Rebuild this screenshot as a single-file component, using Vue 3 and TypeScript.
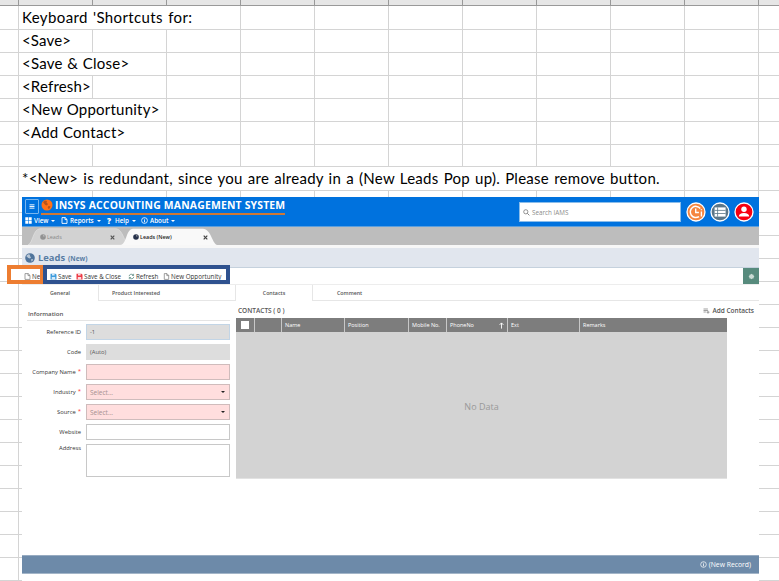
<script setup lang="ts">
interface Cell { span: number; text?: string; cls?: string }
interface Field { label: string; value?: string; kind: string; required?: boolean; select?: boolean }

const blanks = (n: number): Cell[] => Array.from({ length: n }, () => ({ span: 1 }))

const rows: Cell[][] = [
  [{ span: 3, text: "Keyboard 'Shortcuts for:", cls: 'w1' }, ...blanks(8)],
  [{ span: 1, text: '<Save>', cls: 'w2' }, ...blanks(10)],
  [{ span: 2, text: '<Save & Close>', cls: 'w3' }, ...blanks(9)],
  [{ span: 1, text: '<Refresh>', cls: 'w2' }, ...blanks(10)],
  [{ span: 2, text: '<New Opportunity>', cls: 'w3' }, ...blanks(9)],
  [{ span: 2, text: '<Add Contact>', cls: 'w3' }, ...blanks(9)],
  blanks(11),
  [{ span: 9, text: '*<New> is redundant, since you are already in a (New Leads Pop up). Please remove button.', cls: 'w8' }, ...blanks(2)],
  ...Array.from({ length: 17 }, () => blanks(11)),
]

const fields: Field[] = [
  { label: 'Reference ID', value: '-1', kind: 'locked focus' },
  { label: 'Code', value: '(Auto)', kind: 'locked' },
  { label: 'Company Name', kind: 'must', required: true },
  { label: 'Industry', value: 'Select...', kind: 'must', required: true, select: true },
  { label: 'Source', value: 'Select...', kind: 'must', required: true, select: true },
  { label: 'Website', kind: '' },
  { label: 'Address', kind: 'area' },
]

const columns = ['Name', 'Position', 'Mobile No.', 'PhoneNo', 'Ext', 'Remarks']
</script>

<template>
  <div class="page">
    <div class="sheet">
      <div class="row heads"><i></i><b v-for="n in 11" :key="n"></b></div>
      <div v-for="(row, r) in rows" :key="r" class="row">
        <i></i>
        <div v-for="(c, k) in row" :key="k" class="cell" :class="'s' + c.span">
          <span v-if="c.text" :class="c.cls">{{ c.text }}</span>
        </div>
      </div>
    </div>

    <main class="app">
      <header class="top">
        <div class="brand-side">
          <div class="brand">
            <span class="burger"><svg viewBox="0 0 13 14"><path d="M3.8 5.2h5.4M3.8 7h5.4M3.8 8.8h5.4" stroke="#fff" stroke-width="1" /></svg></span>
            <div class="name">
              <svg class="globe" viewBox="0 0 12 12"><circle cx="6" cy="6" r="5.5" fill="#ff7216" /><path d="M2 3l2-1.5 2 .5-.5 1.4L7 5l-1 1.4L4.3 6 3 4.6zM7.4 7l2 .3-.6 2-1.3.8-.8-1.6z" fill="#b9541a" /></svg>
              <h1>INSYS ACCOUNTING MANAGEMENT SYSTEM</h1>
            </div>
          </div>
          <nav class="menu">
            <span class="m1"><svg viewBox="0 0 7 7"><path d="M.3.3h2.9v2.9H.3zM3.8 .3h2.9v2.9H3.8zM.3 3.8h2.9v2.9H.3zM3.8 3.8h2.9v2.9H3.8z" fill="#fff" /></svg>View<em></em></span>
            <span class="m2"><svg viewBox="0 0 7 7"><path d="M1 .6h3.2L6 2.4v4H1zM4 .6v2h2" fill="none" stroke="#fff" stroke-width=".9" /></svg>Reports<em></em></span>
            <span class="m3"><strong>?</strong>Help<em></em></span>
            <span class="m4"><svg viewBox="0 0 7 7"><circle cx="3.5" cy="3.5" r="2.9" fill="none" stroke="#fff" stroke-width=".8" /><path d="M3.5 1.8v.8M3.5 3.1v2.2" stroke="#fff" stroke-width=".9" /></svg>About<em></em></span>
          </nav>
        </div>
        <div class="search">
          <svg viewBox="0 0 8 8"><circle cx="3.2" cy="3.2" r="2.4" fill="none" stroke="#666" stroke-width=".8" /><path d="M5 5l2.3 2.3" stroke="#666" stroke-width=".9" /></svg>
          <span>Search IAMS</span>
        </div>
        <div class="rounds">
          <svg viewBox="0 0 20 20"><circle cx="10" cy="10" r="9" fill="#f5853f" stroke="#fff" stroke-width="1.3" /><path d="M14.2 6.4A5.6 5.6 0 1 0 13 14.6" fill="none" stroke="#fff" stroke-width="1.5" /><path d="M9.7 6.4v4.1h3.2M15.4 9.4v5.2M15.4 7.2v1.1" fill="none" stroke="#fff" stroke-width="1.4" /></svg>
          <svg viewBox="0 0 20 20"><circle cx="10" cy="10" r="9" fill="#5b7688" stroke="#fff" stroke-width="1.3" /><path d="M4.6 5.4h11v9.2h-11z" fill="#fff" /><path d="M4.6 8.4h11M4.6 11.5h11M7.6 5.4v9.2" stroke="#5b7688" stroke-width=".8" /></svg>
          <svg viewBox="0 0 20 20"><circle cx="10" cy="10" r="9" fill="#f80010" stroke="#fff" stroke-width="1.3" /><circle cx="10" cy="7.2" r="2.7" fill="#fff" /><path d="M4.8 14.6c0-2.6 2-3.7 5.2-3.7s5.2 1.1 5.2 3.7z" fill="#fff" /></svg>
        </div>
      </header>

      <div class="tabs">
        <div class="tab old">
          <svg class="shape" viewBox="0 0 101 17" preserveAspectRatio="none"><path d="M0 17C5 15 5 1 12 .7H88C95 1 96 15 101 17z" fill="#d2d2d2" stroke="#e4e4e4" stroke-width=".6" /></svg>
          <svg class="dot" viewBox="0 0 6 6"><circle cx="3" cy="3" r="2.8" fill="#929292" /><path d="M3 1l1.5.5-.5 1.8z" fill="#ccc" /></svg>
          <span>Leads</span><svg class="x" viewBox="0 0 5 5"><path d="M.7.7l3.6 3.6M4.3.7L.7 4.3" stroke="#555" stroke-width="1.2" /></svg>
        </div>
        <div class="tab now">
          <svg class="shape" viewBox="0 0 98 17" preserveAspectRatio="none"><path d="M0 17C6 15 5 1 12 .7H82C90 1 91 15 96 17z" fill="#f9f9f9" /></svg>
          <svg class="dot" viewBox="0 0 6 6"><circle cx="3" cy="3" r="2.8" fill="#25304a" /><path d="M3 1l1.5.5-.5 1.8z" fill="#bbb" /></svg>
          <span>Leads (New)</span><svg class="x" viewBox="0 0 5 5"><path d="M.7.7l3.6 3.6M4.3.7L.7 4.3" stroke="#444" stroke-width="1.2" /></svg>
        </div>
      </div>

      <div class="title">
        <svg viewBox="0 0 10 10"><circle cx="5" cy="5" r="4.8" fill="#50749b" /><path d="M1.2 3l2-1.8 2 .6L4.8 3l1.3 1.2L5 5.5 3.3 5zM6.2 6l2 .2-.8 1.8-1 .4z" fill="#b9c8d8" /></svg>
        <h2>Leads</h2><small>(New)</small>
      </div>

      <div class="tools">
        <span class="t1"><svg viewBox="0 0 7 7"><path d="M1 .6h3.2L6 2.4v4H1zM4 .6v2h2" fill="none" stroke="#777" stroke-width=".7" /></svg>New</span>
        <span class="t2"><svg viewBox="0 0 7 7"><path d="M.5.7h5l1 1v4.8h-6z" fill="#3e9bdc" /><path d="M2 .7h2.6v1.8H2zM1.8 4h3.4v2.5H1.8z" fill="#d7ebf9" /></svg>Save</span>
        <span class="t3"><svg viewBox="0 0 7 7"><path d="M.5.7h5l1 1v4.8h-6z" fill="#ed3a45" /><path d="M2 .7h2.6v1.8H2zM1.8 4h3.4v2.5H1.8z" fill="#fbdcdf" /></svg>Save &amp; Close</span>
        <span class="t4"><svg viewBox="0 0 7 7"><path d="M1.1 3.2a2.3 2.3 0 0 1 4.2-1M5.8 3.8a2.3 2.3 0 0 1-4.2 1M5.6.8v1.7H4M1.3 6.2V4.5H3" fill="none" stroke="#4b8075" stroke-width=".7" /></svg>Refresh</span>
        <span class="t5"><svg viewBox="0 0 7 7"><path d="M1.3.6h2.6l1.8 1.8v4H1.3zM3.8.6v2h2" fill="none" stroke="#777" stroke-width=".7" /></svg>New Opportunity</span>
        <div class="gear"><svg viewBox="0 0 8 8"><path d="M4 .8l1 1 1.3.1.1 1.2L7.3 4l-.9 1-.1 1.2L5 6.3l-1 .9-1-.9-1.3-.1L1.6 5l-.9-1 .9-.9.1-1.2L3 1.8z" fill="#c9dbd4" /></svg></div>
      </div>

      <div class="subtabs">
        <span class="on g">General</span><span class="off p">Product Interested</span>
        <span class="on c">Contacts</span><span class="off m">Comment</span>
      </div>

      <div class="body">
        <section class="form">
          <h3>Information</h3>
          <div v-for="f in fields" :key="f.label" class="field">
            <label>{{ f.label }}<sup v-if="f.required">*</sup></label>
            <div class="box" :class="[f.kind, { select: f.select }]">{{ f.value }}<em v-if="f.select"></em></div>
          </div>
        </section>
        <section class="list">
          <div class="bar">
            <span class="count">CONTACTS ( 0 )</span>
            <span class="add"><svg viewBox="0 0 7 6"><path d="M.5 1h4.4M.5 2.5h4.4M.5 4h2.4M5 2.7v3M3.5 4.2h3" stroke="#777" stroke-width=".7" /></svg>Add Contacts</span>
          </div>
          <div class="thead">
            <span class="check"><i></i></span><span></span>
            <span v-for="c in columns" :key="c">{{ c }}<svg v-if="c === 'PhoneNo'" viewBox="0 0 5 7"><path d="M2.5 6.6V1M.6 2.9L2.5.9l1.9 2" fill="none" stroke="#fff" stroke-width=".9" /></svg></span>
          </div>
          <div class="empty">No Data</div>
        </section>
      </div>

      <footer><svg viewBox="0 0 7 7"><circle cx="3.5" cy="3.5" r="2.8" fill="none" stroke="#fff" stroke-width=".7" /><path d="M3.5 1.8v.8M3.5 3.1v2.2" stroke="#fff" stroke-width=".8" /></svg>(New Record)</footer>
    </main>

    <div class="mark orange"></div>
    <div class="mark blue"></div>
  </div>
</template>

<style>
body { overflow: hidden; background: #fff; }
</style>

<style scoped>
* { box-sizing: border-box; }
.page { position: relative; width: 779px; height: 581px; overflow: hidden; background: #fff; font-family: "Open Sans", "Noto Sans", sans-serif; }
svg { display: block; flex: none; }

.sheet { width: 833px; }
.row { display: grid; grid-template-columns: 19px repeat(11, 74px); height: 23px; }
.row > * { border-right: 1px solid #d4d4d4; border-bottom: 1px solid #d4d4d4; }
.row.heads { height: 6px; background: #e6e6e6; }
.row.heads > * { border-color: #999; }
.s2 { grid-column: span 2; }
.s3 { grid-column: span 3; }
.s9 { grid-column: span 9; }
.cell { padding-left: 3px; line-height: 23px; font-family: Lato, sans-serif; font-size: 15px; color: #000; white-space: nowrap; }
.w1 { letter-spacing: .38px; word-spacing: 1px; }
.w2 { letter-spacing: .17px; }
.w3 { letter-spacing: .22px; word-spacing: .6px; }
.w8 { letter-spacing: .27px; word-spacing: 1px; }

.app { position: absolute; left: 22px; top: 197px; width: 737px; height: 384px; background: #fff; display: flex; flex-direction: column; white-space: nowrap; }
.top { height: 30px; flex: none; background: #0072de; border-bottom: 1px solid #5c9fdd; display: flex; }
.brand-side { width: 497px; padding: 1px 0 0 3px; }
.brand { display: flex; height: 17px; }
.burger { width: 14px; height: 15px; margin: 1px 2px 0 0; border: 1px solid #79b6ee; border-radius: 1px; }
.burger svg { width: 12px; height: 13px; }
.name { display: flex; width: 244px; height: 17px; border-bottom: 2px solid #cf7836; }
.globe { width: 12px; height: 12px; margin-top: 1px; }
h1 { margin: 0 0 0 2px; font-size: 10.4px; line-height: 14px; font-weight: 700; color: #fff; letter-spacing: .19px; }
.menu { display: flex; height: 9px; font-size: 6.3px; line-height: 10px; font-weight: 600; color: #fff; }
.menu span { display: flex; align-items: center; height: 11px; }
.menu svg { width: 7px; height: 7px; margin-right: 2px; }
.menu strong { width: 8px; font-size: 8px; }
.menu em, .select em { border: 2px solid transparent; border-top-color: currentColor; border-bottom: 0; margin-left: 3px; }
.m1 { width: 36px; } .m2 { width: 46px; } .m3 { width: 34px; }
.search { width: 162px; height: 20px; margin-top: 5px; background: #fff; border: 1px solid #8bbdea; display: flex; align-items: center; padding-left: 3px; font-size: 6.3px; color: #8b8b8b; }
.search svg { width: 7px; height: 7px; margin-right: 2px; }
.rounds { display: flex; gap: 4px; margin: 5px 0 0 5px; }
.rounds svg { width: 20px; height: 20px; }

.tabs { height: 18px; flex: none; background: #bdbdbd; display: flex; padding: 1px 0 0 6px; }
.tab { position: relative; display: flex; align-items: center; height: 18px; font-size: 5.4px; color: #888; }
.tab > * { position: relative; }
.tab > .shape { position: absolute; left: 0; top: 0; width: 100%; height: 17px; }
.tab.old { width: 93px; padding-left: 12px; }
.tab.old > .shape { width: 101px; }
.tab.now { width: 98px; padding-left: 12px; font-weight: 600; color: #222; }
.dot { width: 6px; height: 6px; margin-right: 1px; }
.tab span { flex: 1; }
.x { width: 5px; height: 5px; }
.old .x { margin-right: 6px; }
.now .x { margin-right: 11px; }

.title { height: 23px; flex: none; background: #e1e6ee; border-top: 3px solid #f7f7f7; border-bottom: 1px solid #c5d1dd; display: flex; align-items: center; padding-left: 3px; color: #587da4; }
.title svg { width: 10px; height: 10px; margin-right: 3px; }
h2 { margin: 0; font-size: 9.4px; font-weight: 700; }
small { font-size: 6.6px; font-weight: 700; margin: 2px 0 0 3px; }
.tools { height: 16px; flex: none; display: flex; padding-left: 2px; font-size: 6.25px; line-height: 17px; color: #333; }
.tools span { display: flex; align-items: center; height: 16px; }
.tools span svg { width: 7px; height: 7px; margin-right: 1px; }
.t1 { width: 26px; } .t2 { width: 26px; } .t3 { width: 52px; } .t4 { width: 35px; }
.gear { margin-left: auto; width: 16px; height: 16px; background: #578b7d; display: flex; align-items: center; justify-content: center; }
.gear svg { width: 7px; height: 7px; }
.subtabs { display: flex; height: 17px; flex: none; font-size: 5.3px; font-weight: 600; line-height: 16px; color: #555; border-top: 1px solid #ededed; }
.subtabs span { text-align: center; }
.subtabs .off { border-left: 1px solid #e6e6e6; border-bottom: 1px solid #e6e6e6; text-align: left; }
.g { width: 76px; }
.p { width: 138px; padding-left: 13px; border-right: 1px solid #e6e6e6; }
.c { width: 76px; }
.m { flex: 1; padding-left: 24px; }

.body { display: flex; height: 254px; flex: none; }
.form { width: 214px; padding: 6px 6px 0 5px; }
h3 { margin: 0 0 3px; height: 14px; border-bottom: 1px solid #e4e4e4; font-size: 6.1px; line-height: 13px; font-weight: 600; color: #555; padding-left: 1px; }
.field { display: flex; justify-content: flex-end; margin-bottom: 4px; font-size: 5.8px; color: #333; }
label { width: 52px; text-align: right; margin-right: 5px; line-height: 16px; }
.field:last-child label { line-height: 9px; }
sup { color: #f33; margin-left: 2px; font-size: 6px; line-height: 0; vertical-align: 1px; }
.box { flex: none; width: 144px; height: 16px; border: 1px solid #c8c8c8; padding-left: 3px; line-height: 15px; display: flex; align-items: center; }
.locked { background: #ddd; border-color: #ddd; color: #555; }
.focus { border-color: #c2d5e6; }
.must { background: #ffdede; border-color: #cfbcbc; color: #a69090; }
.box.select { font-size: 6.5px; justify-content: space-between; padding-right: 4px; }
.select em { color: #222; margin: 0; }
.box.area { height: 33px; }
.list { width: 523px; }
.bar { height: 17px; padding: 5px 5px 0 2px; display: flex; justify-content: space-between; font-size: 6.5px; line-height: 9px; font-weight: 600; color: #555; }
.add { display: flex; align-items: center; height: 9px; }
.add svg { width: 7px; height: 6px; margin-right: 2px; }
.thead { display: grid; grid-template-columns: 19px 27px 63px 64px 38px 61px 72px 147px; width: 491px; height: 14px; background: #7d7d7d; color: #fff; font-size: 5.5px; line-height: 13px; }
.thead span { border-right: 1px solid #c8c8c8; padding-left: 3px; display: flex; align-items: center; justify-content: space-between; }
.thead span:last-child { border: 0; }
.thead svg { width: 5px; height: 7px; margin-right: 3px; }
.check i { width: 8px; height: 8px; background: #fff; margin-left: 2px; }
.empty { width: 491px; height: 147px; background: #d3d3d3; border-bottom: 1px solid #e2e2e2; display: flex; align-items: center; justify-content: center; font-size: 9px; color: #999; padding-top: 3px; }
footer { height: 19px; flex: none; background: #6d8aa9; border-top: 1px solid #97abc1; border-bottom: 1px solid #a3b5c8; display: flex; align-items: center; justify-content: flex-end; padding-right: 8px; font-size: 6.8px; color: #fff; }
footer svg { width: 7px; height: 7px; margin-right: 2px; }

.mark { position: absolute; top: 265px; height: 19px; }
.orange { left: 7px; width: 36px; border: 4px solid #ed7d31; border-right-width: 3px; background: linear-gradient(90deg, #fff 12px, transparent 12px); }
.blue { left: 43px; width: 187px; border: 4px solid #2f528f; }
</style>
